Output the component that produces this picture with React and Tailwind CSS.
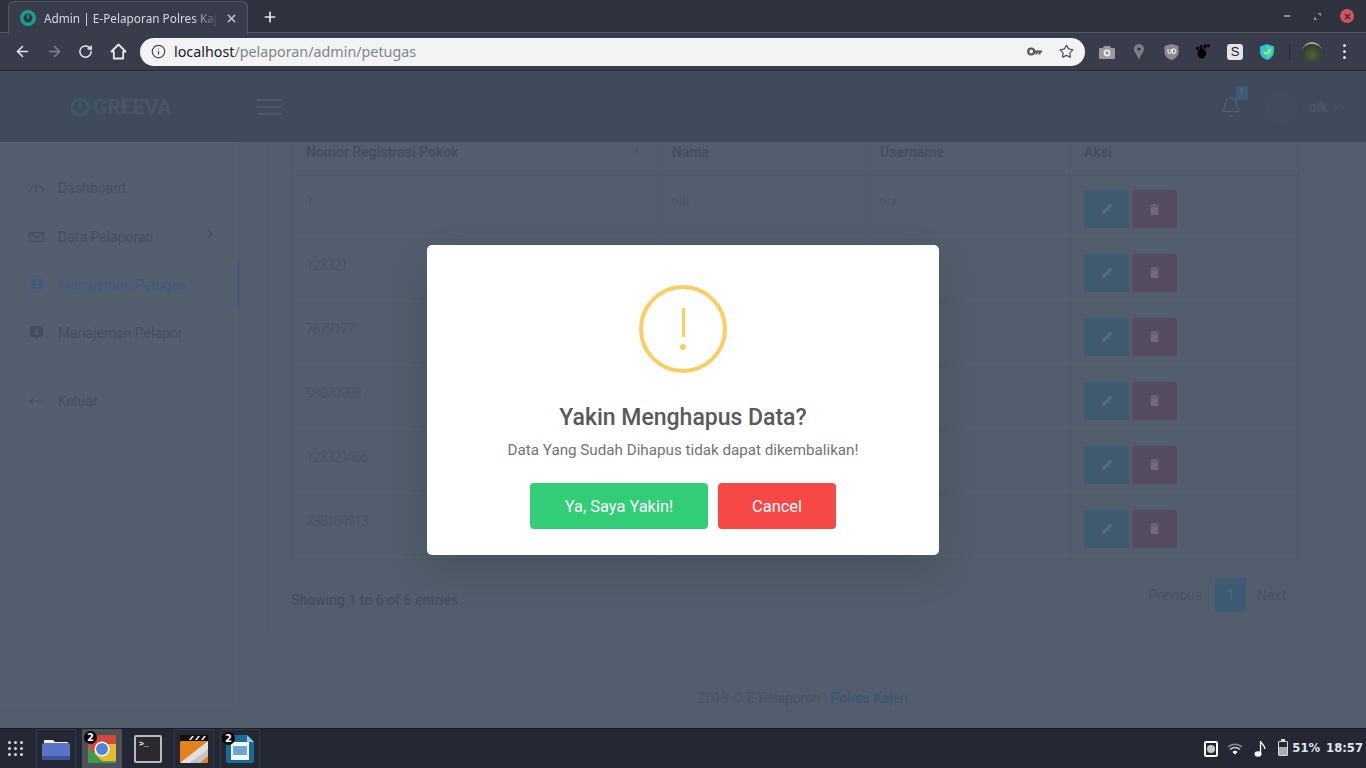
import { ArrowLeft, ArrowRight, RotateCw, Info, Star, X, Plus, ChevronDown, ChevronRight, Bell, Pencil } from "lucide-react";

const rows = ["1", "123321", "7679177", "98070908", "123321456", "338164913"];

function Favicon() {
  return (
    <svg width="16" height="16" viewBox="0 0 16 16">
      <circle cx="8" cy="8" r="8" fill="#17a08c" />
      <circle cx="8" cy="8" r="4.5" fill="#2f3a4a" />
      <rect x="7.2" y="4.5" width="1.6" height="4" fill="#17a08c" />
    </svg>
  );
}

function ExtensionIcons() {
  return (
    <div className="flex items-center">
      {/* camera */}
      <svg className="ml-[14px]" width="16" height="14" viewBox="0 0 16 14">
        <path d="M1 3h3l1-2h6l1 2h3a1 1 0 0 1 1 1v9a1 1 0 0 1-1 1H1a1 1 0 0 1-1-1V4a1 1 0 0 1 1-1z" fill="#9a9a9f" />
        <circle cx="8" cy="8" r="3.4" fill="#eee" />
        <circle cx="8" cy="8" r="1.8" fill="#9a9a9f" />
      </svg>
      {/* pin */}
      <svg className="ml-[19px]" width="10" height="16" viewBox="0 0 10 16">
        <path d="M5 0a5 5 0 0 1 5 5c0 3-3.500 6-5 11C3.500 11 0 8 0 5a5 5 0 0 1 5-5z" fill="#7d7f86" />
        <circle cx="5" cy="5" r="1.500" fill="#25272e" />
      </svg>
      {/* ublock */}
      <svg className="ml-[20px]" width="15" height="16" viewBox="0 0 15 16">
        <path d="M7.500 0l7 2v7c0 3-3.500 6-7 7-3.500-1-7-4-7-7V2z" fill="#8a8a8e" />
        <path d="M4 5v3a1.500 1.500 0 0 0 3 0V5M8.500 5v4.500h1.200a2.200 2.200 0 0 0 0-4.500z" fill="none" stroke="#fff" strokeWidth="1" />
      </svg>
      {/* gnome foot */}
      <svg className="ml-[17px]" width="14" height="15" viewBox="0 0 14 15">
        <ellipse cx="5.800" cy="9.500" rx="4.300" ry="5" fill="#000" />
        <ellipse cx="1.600" cy="4.500" rx="1.400" ry="1.800" fill="#000" />
        <ellipse cx="5" cy="2.900" rx="1.400" ry="2.200" fill="#000" />
        <ellipse cx="9" cy="2.400" rx="1.500" ry="2.400" fill="#000" />
        <ellipse cx="12.400" cy="1.700" rx="1.400" ry="1.700" fill="#000" />
      </svg>
      {/* S button */}
      <div className="ml-[17px] flex h-4 w-4 items-center justify-center rounded-[3px] bg-[#e4e4e6] font-['Liberation_Sans',sans-serif] text-[13px] leading-none text-[#222]">S</div>
      {/* shield */}
      <svg className="ml-[16px]" width="16" height="16" viewBox="0 0 16 16">
        <path d="M8 0l7 2.500v5c0 4-3 7-7 8.500-4-1.500-7-4.500-7-8.500v-5z" fill="#27c4d8" />
        <path d="M8 2l5 1.800v3.700c0 3-2 5.300-5 6.500z" fill="#57d79d" />
        <path d="M4.500 7.500L7 10l4.500-4.500" fill="none" stroke="#e6e13b" strokeWidth="1.500" />
      </svg>
      <div className="ml-[14px] h-4 w-px bg-[#25272e]" />
      {/* avatar */}
      <div className="ml-[12px] h-5 w-5 rounded-full border-t-2 border-[#a9a793] bg-[radial-gradient(circle_at_50%_60%,#4d6238,#35452c_60%,#20241c)]" />
      <div className="ml-[21px] flex flex-col gap-[3px]">
        <span className="h-[3px] w-[3px] rounded-full bg-[#dfe1e6]" />
        <span className="h-[3px] w-[3px] rounded-full bg-[#dfe1e6]" />
        <span className="h-[3px] w-[3px] rounded-full bg-[#dfe1e6]" />
      </div>
    </div>
  );
}

function BrowserBar() {
  return (
    <div className="font-['Noto_Sans',sans-serif]">
      <div className="relative flex h-[33px] items-end border-b border-[#555865] bg-[#2e323e]">
        <div className="absolute left-[8px] top-[1px] flex h-[33px] w-[240px] items-center rounded-t-[6px] border border-b-0 border-[#555865] bg-[#393c4b] pl-[11px]">
          <Favicon />
          <span className="ml-[8px] w-[175px] overflow-hidden whitespace-nowrap text-[11.8px] leading-[16px] text-[#d6dae0] [mask-image:linear-gradient(to_right,black_85%,transparent)]">Admin | E-Pelaporan Polres Kajen</span>
          <X size={13} strokeWidth={2.500} className="ml-[6px] text-[#c6cad0]" />
        </div>
        <Plus size={16} strokeWidth={2.500} className="absolute left-[262px] top-[9px] text-[#e4e6ea]" />
        <div className="mb-[9px] ml-auto mr-[12px] flex items-center">
          <div className="h-[2px] w-[6px] bg-[#8b8e98]" />
          <svg className="ml-[24px]" width="7" height="7" viewBox="0 0 7 7">
            <path d="M7 0v3.500L3.500 0zM0 7V3.500L3.500 7z" fill="#8b8e98" />
          </svg>
          <div className="ml-[19px] flex h-[14px] w-[14px] items-center justify-center rounded-full bg-[#d9535f]">
            <X size={9} strokeWidth={3.500} className="text-[#3a2a30]" />
          </div>
        </div>
      </div>
      <div className="flex h-[38px] items-center border-b border-[#25272e] bg-[#393c4b] pl-[14px]">
        <ArrowLeft size={17} strokeWidth={2.200} className="text-[#e6e8ec]" />
        <ArrowRight size={17} strokeWidth={2.200} className="ml-[15px] text-[#7f828d]" />
        <RotateCw size={15} strokeWidth={2.400} className="ml-[15px] text-[#e6e8ec]" />
        <svg className="ml-[17px]" width="17" height="17" viewBox="0 0 17 17">
          <path d="M8.500 1.500L1.500 8.500h2.300v7h9.400v-7h2.300z" fill="none" stroke="#e6e8ec" strokeWidth="1.800" strokeLinejoin="round" />
        </svg>
        <div className="ml-[13px] flex h-[28px] w-[945px] items-center rounded-full bg-[#f1f3f4] px-[11px]">
          <Info size={15} strokeWidth={2} className="text-[#4a4a4e]" />
          <span className="ml-[8px] pt-[1px] text-[14.3px] leading-none text-[#202124]">localhost<span className="text-[#80868b]">/pelaporan/admin/petugas</span></span>
          <svg className="ml-auto" width="15" height="9" viewBox="0 0 15 9">
            <circle cx="4.200" cy="4.500" r="3" fill="none" stroke="#55565a" strokeWidth="2.200" />
            <path d="M7 3.500h8v2h-1.500v2h-2v-2h-1v2h-2v-2H7z" fill="#55565a" />
          </svg>
          <Star size={15} strokeWidth={2} className="ml-[17px] text-[#55565a]" />
        </div>
        <ExtensionIcons />
      </div>
    </div>
  );
}

function SideItem({ icon, label, active, arrow }) {
  return (
    <div className={`relative flex h-[48px] items-center pl-[28px] ${active ? "border-r-2 border-[#43597a] text-[#43597a]" : "text-[#444f5e]"}`}>
      <span className="flex w-[16px] justify-center">{icon}</span>
      <span className="ml-[14px] text-[14px] leading-none">{label}</span>
      {arrow && <ChevronRight size={14} className="-mt-[6px] ml-auto mr-[22px]" />}
    </div>
  );
}

function Sidebar() {
  return (
    <div className="w-[240px] shrink-0 border-r border-[#505c6a] bg-[#535f6e] pt-[22px]">
      <div className="h-[49px]">
        <SideItem
          label="Dashboard"
          icon={
            <svg width="15" height="10" viewBox="0 0 15 10">
              <path d="M1 9.500A7 7 0 0 1 6.500 2.300M9.800 2.600A7 7 0 0 1 14 9.500M6 9.500L9 1" fill="none" stroke="#444f5e" strokeWidth="1.200" />
            </svg>
          }
        />
      </div>
      <SideItem
        label="Data Pelaporan"
        icon={
          <svg width="15" height="10" viewBox="0 0 15 10">
            <rect x=".6" y=".6" width="13.800" height="8.800" fill="none" stroke="#444f5e" strokeWidth="1.200" />
            <path d="M1 1l6.500 4.500L14 1" fill="none" stroke="#444f5e" strokeWidth="1.200" />
          </svg>
        }
        arrow
      />
      <SideItem
        active
        label="Manajemen Petugas"
        icon={
          <svg width="13" height="13" viewBox="0 0 13 13">
            <path d="M0 3h1v8.500h9V13H1a1 1 0 0 1-1-1z" fill="#43597a" />
            <path d="M3.500 0h8a1.500 1.500 0 0 1 1.500 1.500V10H2V1.500A1.500 1.500 0 0 1 3.500 0z" fill="#43597a" />
            <circle cx="7.500" cy="3.500" r="1.500" fill="#535f6e" />
            <path d="M4.500 8c0-1.500 1.500-2 3-2s3 .5 3 2z" fill="#535f6e" />
          </svg>
        }
      />
      <SideItem
        label="Manajemen Pelapor"
        icon={
          <svg width="13" height="14" viewBox="0 0 13 14">
            <path d="M1.500 0h10A1.500 1.500 0 0 1 13 1.500V10a1 1 0 0 1-1 1H8.500l-2 2.500-2-2.500H1a1 1 0 0 1-1-1V1.500A1.500 1.500 0 0 1 1.500 0z" fill="#444f5e" />
            <circle cx="6.500" cy="4" r="1.600" fill="#535f6e" />
            <path d="M3.500 8.500c0-1.500 1.500-2 3-2s3 .5 3 2z" fill="#535f6e" />
          </svg>
        }
      />
      <div className="mt-[20px]">
        <SideItem
          label="Keluar"
          icon={
            <svg width="15" height="7" viewBox="0 0 15 7">
              <path d="M4 .500L1 3h14M1 3l3 3" fill="none" stroke="#444f5e" strokeWidth="1.200" />
            </svg>
          }
        />
      </div>
    </div>
  );
}

function Tabel() {
  return (
    <table className="w-[1007px] table-fixed border-collapse border-x border-[#4e5a68] text-[14px] text-[#4a5564]">
      <thead>
        <tr className="h-[32px] border-b-2 border-[#4e5a68] text-left text-[#444f5e]">
          <th className="w-[365px] border-r border-[#4e5a68] pb-[11px] pl-[13px] font-semibold">
            <div className="flex justify-between pr-[18px]"><span>Nomor Registrasi Pokok</span><span className="text-[10px]">↕</span></div>
          </th>
          <th className="w-[208px] border-r border-[#4e5a68] pb-[11px] pl-[14px] font-semibold">Nama</th>
          <th className="w-[204px] border-r border-[#4e5a68] pb-[11px] pl-[14px] font-semibold">Username</th>
          <th className="pb-[11px] pl-[14px] font-semibold">Aksi</th>
        </tr>
      </thead>
      <tbody>
        {rows.map((nrp, i) => (
          <tr key={nrp} className="h-[64px] border-b border-[#4e5a68] align-top">
            <td className="border-r border-[#4e5a68] pl-[13px] pt-[16px] leading-[18px] tracking-[-1px]">{nrp}</td>
            <td className="border-r border-[#4e5a68] pl-[13px] pt-[16px] leading-[18px]">{i === 0 ? "oik" : ""}</td>
            <td className="border-r border-[#4e5a68] pl-[13px] pt-[16px] leading-[18px]">{i === 0 ? "oix" : ""}</td>
            <td className="pl-[14px] pt-[14px]">
              <div className="flex gap-[3px]">
                <div className="flex h-[38px] w-[45px] items-center justify-center rounded-[3px] bg-[#3f596e]">
                  <Pencil size={12} fill="#5f6b78" strokeWidth={1} className="text-[#5f6b78]" />
                </div>
                <div className="flex h-[38px] w-[45px] items-center justify-center rounded-[3px] bg-[#564c5f]">
                  <svg width="9" height="11" viewBox="0 0 9 11">
                    <path d="M0 1h2.800l.5-1h2.400l.5 1H9v1.200H0zM.8 3h7.400v7a1 1 0 0 1-1 1H1.800a1 1 0 0 1-1-1z" fill="#6f6b78" />
                  </svg>
                </div>
              </div>
            </td>
          </tr>
        ))}
      </tbody>
    </table>
  );
}

function ModalHapus() {
  return (
    <div className="absolute left-[427px] top-[174px] flex h-[310px] w-[512px] flex-col items-center rounded-[5px] bg-white pt-[40px] shadow-[0_16px_40px_rgba(0,0,0,0.12)]">
      <div className="flex h-[88px] w-[88px] flex-col items-center justify-center rounded-full border-[4px] border-[#fbcd63]">
        <div className="h-[29px] w-[3px] bg-[#fbcd63]" />
        <div className="mt-[7px] h-[6px] w-[6px] rounded-full bg-[#fbcd63]" />
      </div>
      <h2 className="mt-[30px] text-[23px] font-medium leading-[29px] text-[#595959]">Yakin Menghapus Data?</h2>
      <p className="mt-[6px] text-[15.2px] leading-[24px] text-[#6f7378]">Data Yang Sudah Dihapus tidak dapat dikembalikan!</p>
      <div className="mt-[21px] flex gap-[10px]">
        <button className="h-[46px] w-[178px] rounded-[4px] bg-[#31ce77] pt-[2px] text-[16.4px] font-normal text-white">Ya, Saya Yakin!</button>
        <button className="h-[46px] w-[118px] rounded-[4px] bg-[#f64846] pt-[2px] text-[16.4px] font-normal text-white">Cancel</button>
      </div>
    </div>
  );
}

function Halaman() {
  return (
    <div className="relative h-[657px] overflow-hidden bg-[#525e6d] font-['Roboto',sans-serif]">
      <div className="flex h-[71px] items-center border-t border-[#434f60] bg-[#3f4b5c]">
        <div className="ml-[70px] flex items-center">
          <svg width="20" height="20" viewBox="0 0 20 20">
            <circle cx="10" cy="10" r="8" fill="none" stroke="#3a5a66" strokeWidth="3" />
            <rect x="9" y="5" width="2" height="6" fill="#3a5a66" />
          </svg>
          <span className="ml-[3px] pt-[1px] text-[21px] font-bold leading-none text-[#4a5666]"><span className="text-[#3f5664]">G</span>REEVA</span>
        </div>
        <div className="ml-[86px] flex w-[25px] flex-col gap-[5px]">
          <div className="h-[2px] bg-[#4d5868]" />
          <div className="h-[2px] bg-[#4d5868]" />
          <div className="h-[2px] bg-[#4d5868]" />
        </div>
        <div className="relative ml-auto">
          <Bell size={22} strokeWidth={1.500} className="text-[#525d6d]" />
          <span className="absolute -right-[6px] -top-[10px] flex h-[14px] w-[12px] items-center justify-center rounded-[2px] bg-[#3f5b74] text-[10px] leading-none text-[#4f6a80]">1</span>
        </div>
        <div className="ml-[24px] h-[32px] w-[32px] rounded-full bg-[#414d5e]" />
        <span className="ml-[11px] text-[14px] leading-none text-[#515c6c]">oik</span>
        <ChevronDown size={12} strokeWidth={2} className="ml-[4px] mr-[23px] text-[#515c6c]" />
      </div>

      <div className="flex">
        <Sidebar />
        <div className="flex-1 pl-[27px] pr-[42px]">
          <div className="h-[494px] w-[1056px] rounded-b-[3px] border border-t-0 border-[#505c6a] pl-[24px]">
            <Tabel />
            <div className="mt-[18px] flex w-[1006px] items-start justify-between">
              <span className="-ml-[1px] mt-[13px] text-[14px] font-medium leading-[18px] text-[#444f5e]">Showing 1 to 6 of 6 entries</span>
              <div className="flex h-[34px] items-center rounded-[3px] border border-[#505c6a] text-[14px] text-[#48535f]">
                <span className="px-[13px] pt-[2px]">Previous</span>
                <span className="flex h-[34px] w-[31px] items-center justify-center bg-[#3f5b74] pt-[2px] text-[#4f6a80]">1</span>
                <span className="px-[11px] pt-[2px]">Next</span>
              </div>
            </div>
          </div>
          <div className="mt-[52px] pl-[431px] text-[14px] leading-[20px] tracking-[-0.1px] text-[#48535f]">
            2019 © E-Pelaporan | <span className="font-medium text-[#3f5571]">Polres Kajen</span>
          </div>
        </div>
      </div>

      <ModalHapus />
    </div>
  );
}

function Taskbar() {
  return (
    <div className="flex h-[40px] items-center border-t border-[#1a1d25] bg-[#232834] font-['DejaVu_Sans',sans-serif]">
      <div className="ml-[8px] grid grid-cols-3 gap-[3px]">
        {[0, 1, 2, 3, 4, 5, 6, 7, 8].map((n) => (
          <span key={n} className="h-[3px] w-[3px] rounded-full bg-[#d8dadd]" />
        ))}
      </div>
      <div className="ml-[13px] flex h-[39px] w-[40px] items-center justify-center rounded-t-[2px] border border-b-0 border-[#363b47]">
        <svg width="28" height="22" viewBox="0 0 28 22">
          <path d="M2 2h9l2 2h13v3H2z" fill="#f0f0f0" />
          <rect x="0" y="5" width="28" height="17" rx="2" fill="#5a72c4" />
          <rect x="0" y="18" width="28" height="4" rx="1" fill="#3d519c" />
        </svg>
      </div>
      <div className="relative ml-[6px] flex h-[39px] w-[40px] items-center justify-center bg-[#4c505a]">
        <svg width="28" height="28" viewBox="0 0 28 28">
          <rect width="28" height="28" rx="2" fill="#e9b92f" />
          <path d="M0 0h28v9H14L5 20 0 12z" fill="#d8453b" />
          <path d="M0 12l8 16h20V26H14L0 12z M0 12v14a2 2 0 0 0 2 2h8z" fill="#3d9d4c" />
          <circle cx="14" cy="14" r="7.500" fill="#fff" />
          <circle cx="14" cy="14" r="6" fill="#4b84d8" />
        </svg>
        <span className="absolute left-[2px] top-[2px] flex h-[13px] w-[13px] items-center justify-center rounded-full bg-black text-[10px] font-bold leading-none text-white">2</span>
      </div>
      <div className="ml-[12px] flex h-[28px] w-[28px] items-start rounded-[2px] border-[2px] border-[#b9babc] bg-[#2b2a30] p-[3px]">
        <span className="font-['Liberation_Mono',monospace] text-[8px] font-bold leading-none text-white">&gt;_</span>
      </div>
      <div className="ml-[12px] flex h-[39px] w-[40px] items-center justify-center rounded-t-[2px] border border-b-0 border-[#363b47]">
        <svg width="28" height="28" viewBox="0 0 28 28">
          <rect y="6" width="28" height="22" rx="1" fill="#e5811c" />
          <path d="M10 28L28 12v9l-8 7z" fill="#c4c4c4" />
          <path d="M0 28L28 6v8L10 28z" fill="#e0e0e0" />
          <rect width="28" height="6" fill="#111" />
          <path d="M9 5l3-4h2l-3 4zM15 5l3-4h2l-3 4zM21 5l3-4h2l-3 4z" fill="#eee" />
        </svg>
      </div>
      <div className="relative ml-[6px] flex h-[39px] w-[40px] items-center justify-center rounded-t-[2px] border border-b-0 border-[#363b47]">
        <svg width="28" height="28" viewBox="0 0 28 28">
          <path d="M2 0h19l7 7v19a2 2 0 0 1-2 2H2a2 2 0 0 1-2-2V2a2 2 0 0 1 2-2z" fill="#1b6b96" />
          <rect x="5" y="7" width="18" height="18" fill="#f4f6f8" />
          <rect x="7" y="11" width="14" height="9" fill="#6aa6cf" />
          <path d="M21 0l7 7h-7z" fill="#9cc7e0" />
        </svg>
        <span className="absolute left-[1px] top-[2px] flex h-[13px] w-[13px] items-center justify-center rounded-full bg-black text-[10px] font-bold leading-none text-white">2</span>
      </div>

      <div className="ml-auto flex items-center pr-[3px]">
        <div className="flex h-[16px] w-[14px] items-center justify-center rounded-[2px] border-2 border-white">
          <div className="h-[8px] w-[8px] rounded-full bg-[#c6c8cc]" />
        </div>
        <svg className="ml-[9px]" width="16" height="12" viewBox="0 0 16 12">
          <path d="M1 4a10 10 0 0 1 14 0" fill="none" stroke="#8a8c90" strokeWidth="1.500" />
          <path d="M3 6.500a7 7 0 0 1 10 0" fill="none" stroke="#c8cacc" strokeWidth="1.500" />
          <path d="M5.500 9a3.500 3.500 0 0 1 5 0L8 11.500z" fill="#fff" />
        </svg>
        <svg className="ml-[11px]" width="12" height="16" viewBox="0 0 12 16">
          <ellipse cx="4" cy="13" rx="3.500" ry="2.800" fill="#fff" />
          <path d="M6.500 13V0c.5 3 4.500 4 4.500 8" fill="none" stroke="#fff" strokeWidth="1.300" />
        </svg>
        <div className="relative ml-[12px] h-[15px] w-[10px] rounded-[1px] border border-[#d8dadd]">
          <div className="absolute -top-[3px] left-[2px] h-[2px] w-[4px] bg-[#d8dadd]" />
          <div className="absolute bottom-0 left-0 right-0 h-[8px] bg-[#a8aaae]" />
        </div>
        <span className="ml-[4px] text-[11.6px] font-bold leading-none text-[#dfe6f0]">51%</span>
        <span className="ml-[6px] text-[11.6px] font-bold leading-none text-[#dfe6f0]">18:57</span>
      </div>
    </div>
  );
}

export default function App() {
  return (
    <div className="h-[768px] w-[1366px] overflow-hidden">
      <BrowserBar />
      <Halaman />
      <Taskbar />
    </div>
  );
}
